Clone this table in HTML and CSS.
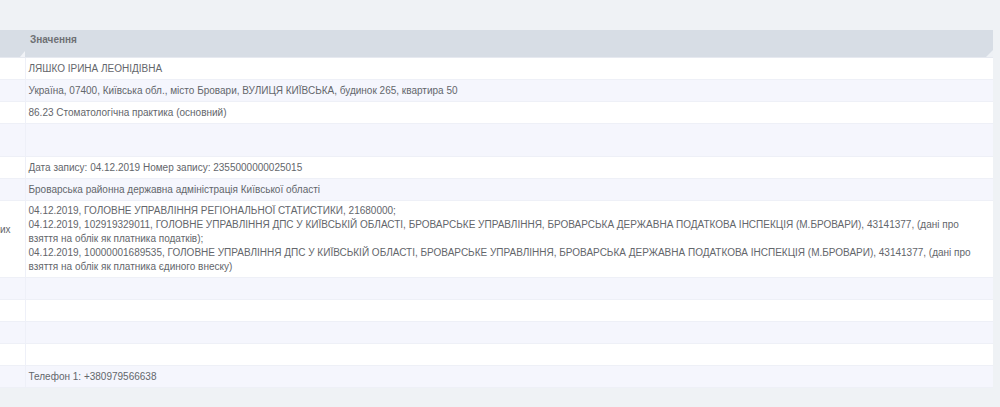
FILE: index.html
```html
<!DOCTYPE html>
<html lang="uk">
<head>
<meta charset="utf-8">
<title>Значення</title>
<link rel="stylesheet" href="styles.css">
</head>
<body>
<div class="page">
  <table class="grid">
    <colgroup><col class="c-label"><col class="c-value"></colgroup>
    <thead>
      <tr>
        <th class="h-label"></th>
        <th class="h-value">Значення</th>
      </tr>
    </thead>
    <tbody>
      <tr><td class="lbl"></td><td>ЛЯШКО ІРИНА ЛЕОНІДІВНА</td></tr>
      <tr class="alt"><td class="lbl"></td><td>Україна, 07400, Київська обл., місто Бровари, ВУЛИЦЯ КИЇВСЬКА, будинок 265, квартира 50</td></tr>
      <tr><td class="lbl"></td><td>86.23 Стоматологічна практика (основний)</td></tr>
      <tr class="alt tall"><td class="lbl"></td><td></td></tr>
      <tr><td class="lbl"></td><td>Дата запису: 04.12.2019 Номер запису: 2355000000025015</td></tr>
      <tr class="alt"><td class="lbl"></td><td>Броварська районна державна адміністрація Київської області</td></tr>
      <tr class="multi"><td class="lbl"><span class="cut">их</span></td><td>04.12.2019, ГОЛОВНЕ УПРАВЛІННЯ РЕГІОНАЛЬНОЇ СТАТИСТИКИ, 21680000;<br>04.12.2019, 102919329011, ГОЛОВНЕ УПРАВЛІННЯ ДПС У КИЇВСЬКІЙ ОБЛАСТІ, БРОВАРСЬКЕ УПРАВЛІННЯ, БРОВАРСЬКА ДЕРЖАВНА ПОДАТКОВА ІНСПЕКЦІЯ (М.БРОВАРИ), 43141377, (дані про<br>взяття на облік як платника податків);<br>04.12.2019, 10000001689535, ГОЛОВНЕ УПРАВЛІННЯ ДПС У КИЇВСЬКІЙ ОБЛАСТІ, БРОВАРСЬКЕ УПРАВЛІННЯ, БРОВАРСЬКА ДЕРЖАВНА ПОДАТКОВА ІНСПЕКЦІЯ (М.БРОВАРИ), 43141377, (дані про<br>взяття на облік як платника єдиного внеску)</td></tr>
      <tr class="alt"><td class="lbl"></td><td></td></tr>
      <tr><td class="lbl"></td><td></td></tr>
      <tr class="alt"><td class="lbl"></td><td></td></tr>
      <tr><td class="lbl"></td><td></td></tr>
      <tr class="alt"><td class="lbl"></td><td>Телефон 1: +380979566638</td></tr>
    </tbody>
  </table>
</div>
</body>
</html>
```

FILE: styles.css
```css
html, body {
  margin: 0;
  padding: 0;
  background: #eff2f5;
}
body {
  font-family: "Liberation Sans", Arial, sans-serif;
  font-size: 10px;
  color: #63666b;
}
.page {
  padding: 30px 7px 0 0;
}
.grid {
  width: 993px;
  border-collapse: collapse;
  table-layout: fixed;
}
.c-label { width: 25px; }
.grid th {
  position: relative;
  height: 27px;
  padding: 3px 5px 0;
  vertical-align: top;
  text-align: left;
  background: #d7dde5;
  color: #6e7074;
  font-weight: bold;
  font-size: 10px;
  line-height: 13px;
  box-sizing: border-box;
  border-bottom: 1px solid #e6e9f0;
}
.grid th::after {
  content: "";
  position: absolute;
  right: 0;
  bottom: 0;
  width: 0;
  height: 0;
  border-style: solid;
  border-width: 0 0 7px 7px;
  border-color: transparent transparent #eef1f5 transparent;
}
.grid th.h-label::after {
  border-width: 0 0 6px 5px;
  border-color: transparent transparent #f1f3f7 transparent;
}
.grid td {
  height: 22px;
  padding: 0 3px;
  line-height: 13px;
  vertical-align: middle;
  background: #ffffff;
  border-bottom: 1px solid #eef0f7;
  white-space: nowrap;
  overflow: hidden;
  box-sizing: border-box;
}
.grid td.lbl {
  padding: 0;
  border-right: 1px solid #eef0f8;
}
.grid tr.alt td {
  background: #f5f6fd;
}
.grid tr.tall td {
  height: 33px;
}
.grid tr.multi td {
  height: 75px;
  padding-top: 3px;
  padding-bottom: 2px;
  line-height: 14.2px;
}
.grid tr.multi td.lbl {
  padding: 0 0 16px 0;
}
.cut {
  display: block;
  text-align: right;
  padding-right: 15px;
}
```
